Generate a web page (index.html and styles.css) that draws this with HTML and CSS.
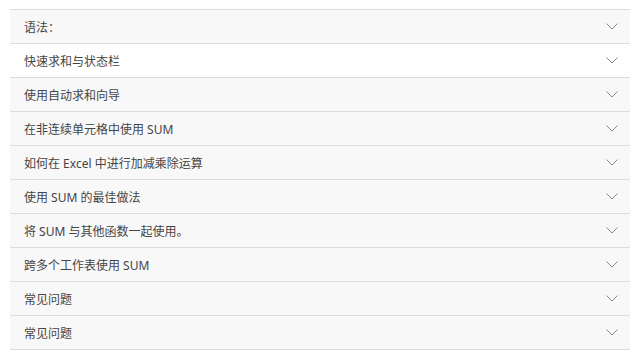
FILE: index.html
```html
<!DOCTYPE html>
<html>
<head>
	<meta charset="utf-8">
	<title>SUM 函数</title>
	<link rel="stylesheet" href="styles.css">
</head>
<body>
	<!-- 折叠列表 -->
	<ul class="faq">
		<li class="item"><span>语法：</span><svg class="arrow" viewBox="0 0 12 7"><path d="M0.5 0.5 L6 6 L11.5 0.5"/></svg></li>
		<li class="item white"><span>快速求和与状态栏</span><svg class="arrow" viewBox="0 0 12 7"><path d="M0.5 0.5 L6 6 L11.5 0.5"/></svg></li>
		<li class="item"><span>使用自动求和向导</span><svg class="arrow" viewBox="0 0 12 7"><path d="M0.5 0.5 L6 6 L11.5 0.5"/></svg></li>
		<li class="item"><span>在非连续单元格中使用 SUM</span><svg class="arrow" viewBox="0 0 12 7"><path d="M0.5 0.5 L6 6 L11.5 0.5"/></svg></li>
		<li class="item"><span>如何在 Excel 中进行加减乘除运算</span><svg class="arrow" viewBox="0 0 12 7"><path d="M0.5 0.5 L6 6 L11.5 0.5"/></svg></li>
		<li class="item"><span>使用 SUM 的最佳做法</span><svg class="arrow" viewBox="0 0 12 7"><path d="M0.5 0.5 L6 6 L11.5 0.5"/></svg></li>
		<li class="item"><span>将 SUM 与其他函数一起使用。</span><svg class="arrow" viewBox="0 0 12 7"><path d="M0.5 0.5 L6 6 L11.5 0.5"/></svg></li>
		<li class="item"><span>跨多个工作表使用 SUM</span><svg class="arrow" viewBox="0 0 12 7"><path d="M0.5 0.5 L6 6 L11.5 0.5"/></svg></li>
		<li class="item"><span>常见问题</span><svg class="arrow" viewBox="0 0 12 7"><path d="M0.5 0.5 L6 6 L11.5 0.5"/></svg></li>
		<li class="item"><span>常见问题</span><svg class="arrow" viewBox="0 0 12 7"><path d="M0.5 0.5 L6 6 L11.5 0.5"/></svg></li>
	</ul>
</body>
</html>
```
FILE: styles.css
```css
* {
	margin: 0;
	padding: 0;
	box-sizing: border-box;
}

ul, li {
	list-style: none;
}

body {
	background-color: #fff;
	font-family: "Noto Sans", "Noto Sans CJK SC", sans-serif;
	font-size: 12px;
	color: #454545;
	padding: 9px 10px;
}

/* 列表 */
.faq {
	border-top: 1px solid #dcdcdc;
}

.faq > .item {
	height: 34px;
	display: flex;
	align-items: center;
	justify-content: space-between;
	padding: 0 12px 0 14px;
	background-color: #f8f8f8;
	border-bottom: 1px solid #dcdcdc;
}

.faq > .item.white {
	background-color: #fff;
}

/* 下拉箭头 */
.arrow {
	width: 12px;
	height: 7px;
	fill: none;
	stroke: #888;
	stroke-width: 1;
}
```
